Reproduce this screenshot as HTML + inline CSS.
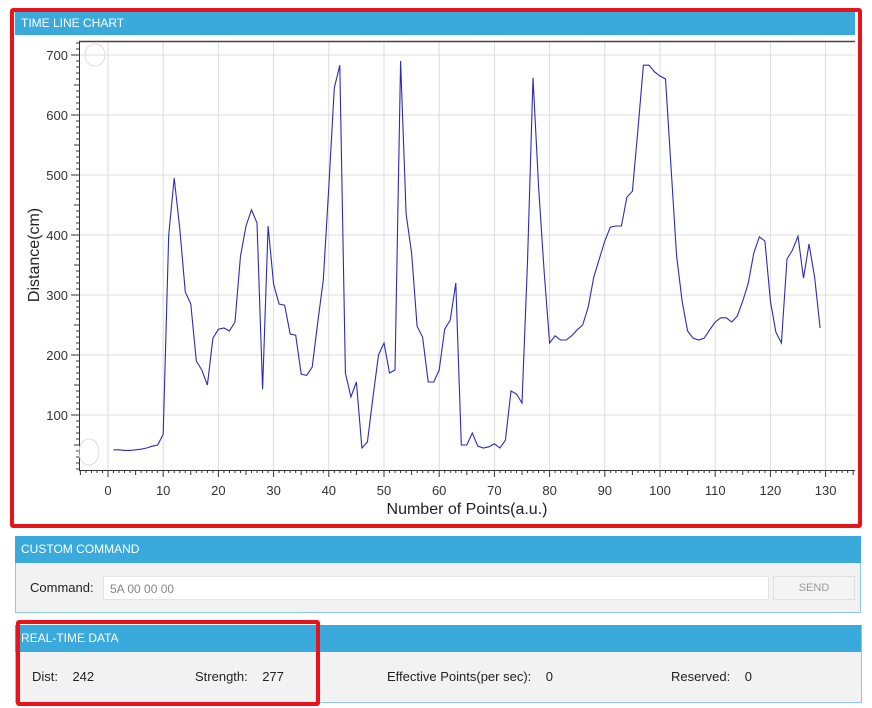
<!DOCTYPE html>
<html><head><meta charset="utf-8"><style>
body{margin:0;width:872px;height:708px;background:#fff;position:relative;overflow:hidden;font-family:"Liberation Sans",sans-serif}
.a{position:absolute}
.hdr{background:#3aa9dc;color:#fff;font-size:12px;line-height:26px;padding-left:6px}
</style></head><body>
<div class="a" style="left:15px;top:12px;width:840px;height:508px;background:#fff"></div>
<div class="a hdr" style="left:15px;top:12px;width:834px;height:23px;line-height:22px">TIME LINE CHART</div>
<svg class="a" style="left:0;top:0" width="872" height="530" id="ch" font-family="Liberation Sans, sans-serif"></svg>
<div class="a" style="left:10px;top:8px;width:844px;height:512px;border:4px solid #e8141c;border-radius:3px"></div>

<div class="a" style="left:15px;top:536px;width:844px;height:75px;border:1px solid #8cc8e6;background:#f2f2f2"></div>
<div class="a hdr" style="left:15px;top:536px;width:840px;height:27px">CUSTOM COMMAND</div>
<div class="a" style="left:30px;top:580px;font-size:13px;color:#222">Command:</div>
<div class="a" style="left:103px;top:576px;height:24px;background:#fff;border:1px solid #e4e4e4;font-size:12px;color:#888;line-height:24px;padding-left:6px;box-sizing:border-box;width:666px">5A 00 00 00</div>
<div class="a" style="left:773px;top:576px;width:82px;height:24px;background:#f4f4f4;border:1px solid #e0e0e0;box-sizing:border-box;font-size:11px;color:#999;text-align:center;line-height:23px">SEND</div>

<div class="a" style="left:15px;top:625px;width:845px;height:77px;border:1px solid #8cc8e6;border-top:none;background:#f2f2f2"></div>
<div class="a hdr" style="left:15px;top:625px;width:840px;height:27px;padding-left:6px">REAL-TIME DATA</div>
<div class="a" style="left:32px;top:669px;font-size:13px;color:#222">Dist:&nbsp;&nbsp;&nbsp; 242</div>
<div class="a" style="left:195px;top:669px;font-size:13px;color:#222">Strength:&nbsp;&nbsp;&nbsp; 277</div>
<div class="a" style="left:387px;top:669px;font-size:13px;color:#222">Effective Points(per sec):&nbsp;&nbsp;&nbsp; 0</div>
<div class="a" style="left:671px;top:669px;font-size:13px;color:#222">Reserved:&nbsp;&nbsp;&nbsp; 0</div>
<div class="a" style="left:16px;top:620px;width:296px;height:78px;border:4px solid #e8141c;border-radius:3px"></div>

<script>
var s=document.getElementById('ch'),h='';
function X(i){return 108+5.52*i}function Y(v){return 475-0.6*v}
h+='<rect x="79" y="41" width="776" height="429" fill="#fff"/>';
for(var i=0;i<=130;i+=10)h+='<line x1="'+X(i)+'" y1="41" x2="'+X(i)+'" y2="470" stroke="#ddd"/>';
for(var v=100;v<=700;v+=100)h+='<line x1="79" y1="'+Y(v)+'" x2="855" y2="'+Y(v)+'" stroke="#ddd"/>';
h+='<line x1="79" y1="41.5" x2="855" y2="41.5" stroke="#444" stroke-width="1.5"/>';
h+='<line x1="79.5" y1="41" x2="79.5" y2="470" stroke="#333"/><line x1="79" y1="470.5" x2="855" y2="470.5" stroke="#333"/>';
for(var i=-5;i<=135;i++){var L=i%10==0?7:(i%5==0?5:3);h+='<line x1="'+X(i)+'" y1="470" x2="'+X(i)+'" y2="'+(470+L)+'" stroke="#333"/>';}
for(var v=-10;v<=720;v+=10){var yy=Y(v);if(yy<41||yy>470)continue;var L=v%100==0?8:(v%50==0?5:3);h+='<line x1="'+(79-L)+'" y1="'+yy+'" x2="79" y2="'+yy+'" stroke="#333"/>';}
for(var i=0;i<=130;i+=10)h+='<text x="'+X(i)+'" y="495" font-size="13" fill="#333" text-anchor="middle">'+i+'</text>';
for(var v=100;v<=700;v+=100)h+='<text x="68" y="'+(Y(v)+5)+'" font-size="13" fill="#333" text-anchor="end">'+v+'</text>';
h+='<text x="467" y="514" font-size="16" fill="#222" text-anchor="middle">Number of Points(a.u.)</text>';
h+='<text transform="translate(39,255) rotate(-90)" font-size="16" fill="#222" text-anchor="middle">Distance(cm)</text>';
h+='<ellipse cx="95" cy="55" rx="10" ry="11" fill="none" stroke="#ddd"/><ellipse cx="89" cy="452" rx="10" ry="13" fill="none" stroke="#ddd"/>';
var d=[[1,42],[2,42],[3,41],[4,41],[5,42],[6,43],[7,45],[8,48],[9,50],[10,68],[11,400],[12,495],[13,410],[14,305],[15,285],[16,190],[17,175],[18,150],[19,228],[20,243],[21,245],[22,240],[23,255],[24,365],[25,415],[26,442],[27,420],[28,143],[29,415],[30,318],[31,285],[32,283],[33,235],[34,233],[35,168],[36,166],[37,180],[38,255],[39,325],[40,480],[41,645],[42,683],[43,170],[44,130],[45,155],[46,45],[47,55],[48,130],[49,200],[50,220],[51,170],[52,175],[53,690],[54,435],[55,370],[56,248],[57,230],[58,155],[59,155],[60,175],[61,243],[62,258],[63,320],[64,50],[65,50],[66,70],[67,48],[68,45],[69,47],[70,52],[71,45],[72,58],[73,140],[74,135],[75,120],[76,355],[77,662],[78,480],[79,340],[80,220],[81,232],[82,225],[83,225],[84,232],[85,242],[86,250],[87,280],[88,330],[89,360],[90,390],[91,413],[92,415],[93,415],[94,463],[95,473],[96,575],[97,683],[98,683],[99,672],[100,665],[101,660],[103,365],[104,290],[105,240],[106,228],[107,225],[108,228],[109,242],[110,255],[111,262],[112,262],[113,255],[114,265],[115,290],[116,320],[117,370],[118,397],[119,390],[120,290],[121,238],[122,220],[123,360],[124,375],[125,398],[126,328],[127,385],[128,330],[129,245]];
h+='<polyline fill="none" stroke="#2b2bb8" stroke-width="1.1" points="'+d.map(function(p){return X(p[0]).toFixed(1)+','+Y(p[1]).toFixed(1)}).join(' ')+'"/>';
s.innerHTML=h;
</script>
</body></html>
